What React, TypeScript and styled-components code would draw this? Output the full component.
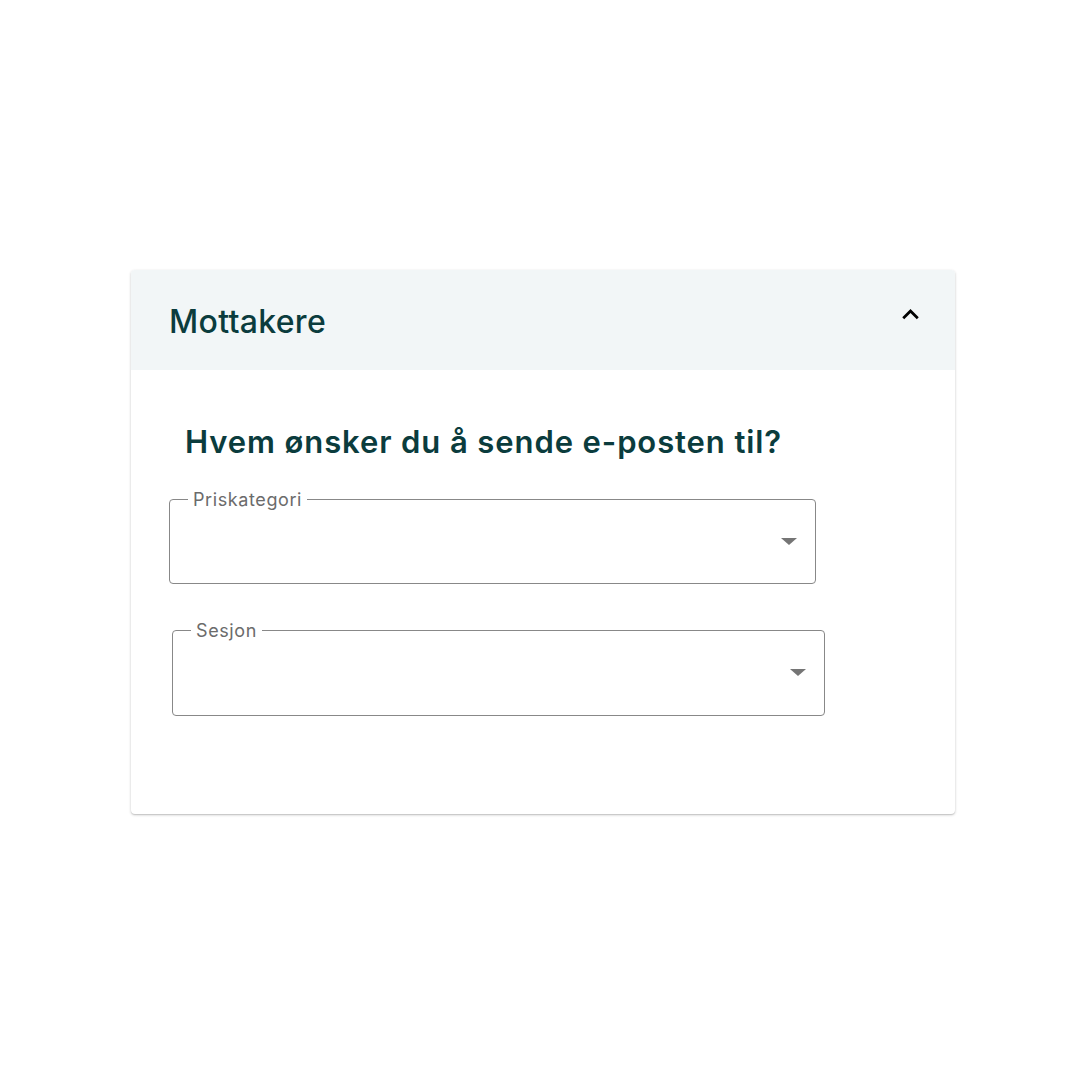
import React from 'react';
import styled, { createGlobalStyle } from 'styled-components';

const GlobalStyle = createGlobalStyle`
  html, body {
    margin: 0;
    padding: 0;
    background: #ffffff;
    font-family: Inter, "Noto Sans", "Liberation Sans", sans-serif;
  }
`;

const Page = styled.div`
  width: 1080px;
  height: 1080px;
  padding-top: 270px;
  padding-left: 131px;
  box-sizing: border-box;
`;

const Card = styled.section`
  width: 824px;
  height: 544px;
  background: #ffffff;
  border-radius: 4px;
  box-shadow: 0 1px 3px rgba(0, 0, 0, 0.2), 0 1px 1px rgba(0, 0, 0, 0.1);
  display: flex;
  flex-direction: column;
  overflow: hidden;
`;

const Header = styled.header`
  height: 100px;
  flex-shrink: 0;
  background: #f2f6f7;
  display: flex;
  align-items: center;
  justify-content: space-between;
  padding: 0 28px 0 38px;
`;

const Title = styled.h2`
  margin: 2px 0 0;
  font-size: 32px;
  font-weight: 500;
  color: #0b3c3d;
  letter-spacing: 0.3px;
`;

const Toggle = styled.button`
  border: none;
  background: none;
  padding: 0;
  margin-bottom: 12px;
  display: flex;
  color: #000;
  cursor: pointer;
`;

const Body = styled.div`
  padding: 50px 38px 0;
  display: flex;
  flex-direction: column;
`;

const Question = styled.h3`
  margin: 0 0 25px 16px;
  font-size: 31px;
  line-height: 44px;
  font-weight: 600;
  color: #0b3c3d;
  letter-spacing: 0.9px;
`;

const Field = styled.fieldset<{ $offset: number; $width: number; $gap: number; $height: number }>`
  margin: ${p => p.$gap}px 0 0 ${p => p.$offset}px;
  width: ${p => p.$width}px;
  height: ${p => p.$height}px;
  box-sizing: border-box;
  border: 1px solid #888888;
  border-radius: 4px;
  padding: 0 18px 0 16px;
  min-width: 0;
`;

const Label = styled.legend`
  padding: 0 5px;
  margin-left: 2px;
  font-size: 18px;
  line-height: 20px;
  color: #6b6b6b;
  letter-spacing: 0.6px;
  transform: translateY(1px);
`;

const Control = styled.div`
  height: 74px;
  display: flex;
  align-items: center;
  justify-content: flex-end;
`;

const Arrow = styled.span`
  width: 0;
  height: 0;
  margin-top: -9px;
  border-left: 8px solid transparent;
  border-right: 8px solid transparent;
  border-top: 7px solid #757575;
`;

const ExpandLess: React.FC = () => (
  <svg width="33" height="33" viewBox="0 0 24 24" fill="currentColor" aria-hidden="true">
    <path d="M12 8l-6 6 1.41 1.41L12 10.83l4.59 4.58L18 14z" />
  </svg>
);

const SelectField: React.FC<{ label: string; offset: number; width: number; gap: number; height: number }> = ({
  label,
  offset,
  width,
  gap,
  height,
}) => (
  <Field $offset={offset} $width={width} $gap={gap} $height={height}>
    <Label>{label}</Label>
    <Control>
      <Arrow />
    </Control>
  </Field>
);

const App: React.FC = () => {
  return (
    <>
      <GlobalStyle />
      <Page>
        <Card>
          <Header>
            <Title>Mottakere</Title>
            <Toggle aria-label="Skjul">
              <ExpandLess />
            </Toggle>
          </Header>
          <Body>
            <Question>Hvem ønsker du å sende e-posten til?</Question>
            <SelectField label="Priskategori" offset={0} width={647} gap={0} height={95} />
            <SelectField label="Sesjon" offset={3} width={653} gap={36} height={96} />
          </Body>
        </Card>
      </Page>
    </>
  );
};

export default App;
